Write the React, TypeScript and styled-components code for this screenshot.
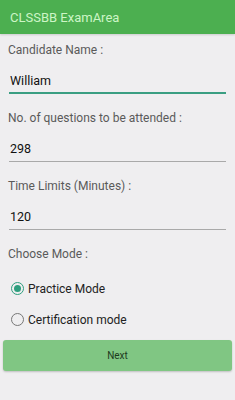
import React, { useState } from "react";
import styled, { createGlobalStyle } from "styled-components";

const GlobalStyle = createGlobalStyle`
  html, body {
    margin: 0;
    padding: 0;
    background: #efeef0;
    font-family: Roboto, "Liberation Sans", sans-serif;
  }
`;

const Screen = styled.div`
  width: 235px;
  height: 400px;
  background: #efeef0;
  overflow: hidden;
`;

const Header = styled.header`
  height: 34px;
  background: #4caf50;
  color: #cdf5c6;
  font-size: 13px;
  display: flex;
  align-items: center;
  padding: 0 10px;
  box-shadow: 0 1px 2px rgba(0, 0, 0, 0.15);
`;

const Form = styled.div`
  display: flex;
  flex-direction: column;
  padding: 8px 8px 0;
`;

const Label = styled.div`
  font-size: 12px;
  color: #5a5a5a;
  line-height: 16px;
`;

const Field = styled.div`
  display: flex;
  flex-direction: column;
  margin-bottom: 16px;
`;

const Input = styled.input<{ $focused?: boolean }>`
  height: 36px;
  border: none;
  border-bottom: ${(p) => (p.$focused ? "2px solid #3a9e82" : "1px solid #a9a9a9")};
  background: transparent;
  font-family: inherit;
  font-size: 12.5px;
  color: #111;
  padding: 10px 1px 0;
  margin: 0 1px;
  box-sizing: border-box;
  outline: none;
`;

const RadioGroup = styled.div`
  display: flex;
  flex-direction: column;
  padding-top: 11px;
`;

const RadioRow = styled.label`
  display: flex;
  align-items: center;
  gap: 4px;
  height: 31px;
  font-size: 12px;
  color: #222;
  padding-left: 3px;
`;

const RadioCircle = styled.span<{ $checked: boolean }>`
  width: 11px;
  height: 11px;
  border-radius: 50%;
  border: 1.5px solid ${(p) => (p.$checked ? "#2e9e7e" : "#777")};
  display: flex;
  align-items: center;
  justify-content: center;
  &::after {
    content: "";
    width: 7px;
    height: 7px;
    border-radius: 50%;
    background: ${(p) => (p.$checked ? "#2e9e7e" : "transparent")};
  }
`;

const NextButton = styled.button`
  margin: 5px -5px 0;
  height: 31px;
  border: none;
  border-radius: 3px;
  background: #80c683;
  color: #1d3a1d;
  font-family: inherit;
  font-size: 10px;
  box-shadow: 0 1px 2px rgba(0, 0, 0, 0.2);
`;

export default function App() {
  const [mode, setMode] = useState("practice");
  return (
    <Screen>
      <GlobalStyle />
      <Header>CLSSBB ExamArea</Header>
      <Form>
        <Field>
          <Label>Candidate Name :</Label>
          <Input $focused defaultValue="William" />
        </Field>
        <Field>
          <Label>No. of questions to be attended :</Label>
          <Input defaultValue="298" />
        </Field>
        <Field>
          <Label>Time Limits (Minutes) :</Label>
          <Input defaultValue="120" />
        </Field>
        <Label>Choose Mode :</Label>
        <RadioGroup>
          <RadioRow onClick={() => setMode("practice")}>
            <RadioCircle $checked={mode === "practice"} />
            Practice Mode
          </RadioRow>
          <RadioRow onClick={() => setMode("cert")}>
            <RadioCircle $checked={mode === "cert"} />
            Certification mode
          </RadioRow>
        </RadioGroup>
        <NextButton>Next</NextButton>
      </Form>
    </Screen>
  );
}
